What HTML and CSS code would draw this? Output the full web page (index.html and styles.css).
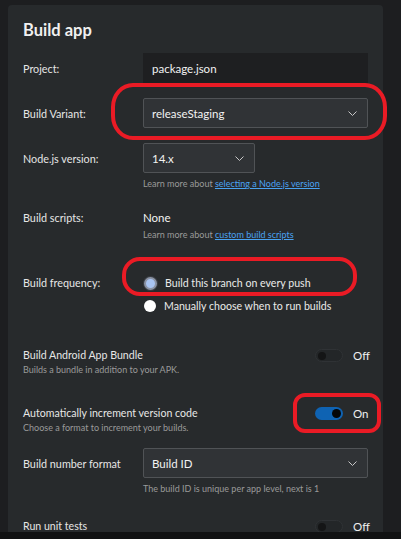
FILE: index.html
```html
<!DOCTYPE html>
<html>
<head>
<meta charset="utf-8">
<link rel="stylesheet" href="styles.css">
</head>
<body>
<div class="viewport">
  <div class="panel">
    <h1 class="title">Build app</h1>

    <div class="row row-project">
      <div class="label">Project:</div>
      <div class="input">package.json</div>
    </div>

    <div class="row row-variant">
      <div class="label">Build Variant:</div>
      <div class="select wide">
        <span>releaseStaging</span>
        <svg class="chev" width="9" height="5" viewBox="0 0 9 5"><path d="M0.5 0.5 L4.5 4.5 L8.5 0.5" fill="none" stroke="#c8c8c8" stroke-width="1"/></svg>
      </div>
      <div class="mark mark-variant"></div>
    </div>

    <div class="row row-node">
      <div class="label">Node.js version:</div>
      <div class="select narrow">
        <span>14.x</span>
        <svg class="chev" width="9" height="5" viewBox="0 0 9 5"><path d="M0.5 0.5 L4.5 4.5 L8.5 0.5" fill="none" stroke="#c8c8c8" stroke-width="1"/></svg>
      </div>
    </div>
    <div class="help help-node">Learn more about <a href="#">selecting a Node.js version</a></div>

    <div class="row row-scripts">
      <div class="label">Build scripts:</div>
      <div class="value">None</div>
    </div>
    <div class="help help-scripts">Learn more about <a href="#">custom build scripts</a></div>

    <div class="row row-freq">
      <div class="label">Build frequency:</div>
      <div class="radios">
        <div class="radio-line"><span class="radio checked"></span><span>Build this branch on every push</span></div>
        <div class="radio-line"><span class="radio"></span><span>Manually choose when to run builds</span></div>
      </div>
      <div class="mark mark-freq"></div>
    </div>

    <div class="toggle-row row-bundle">
      <div class="toggle-text">
        <div class="t-title">Build Android App Bundle</div>
        <div class="t-sub">Builds a bundle in addition to your APK.</div>
      </div>
      <div class="switch-wrap">
        <span class="switch off"><span class="knob"></span></span>
        <span class="switch-label">Off</span>
      </div>
    </div>

    <div class="toggle-row row-auto">
      <div class="toggle-text">
        <div class="t-title">Automatically increment version code</div>
        <div class="t-sub">Choose a format to increment your builds.</div>
      </div>
      <div class="switch-wrap">
        <span class="switch on"><span class="knob"></span></span>
        <span class="switch-label">On</span>
      </div>
      <div class="mark mark-auto"></div>
    </div>

    <div class="row row-format">
      <div class="label">Build number format</div>
      <div class="select wide">
        <span>Build ID</span>
        <svg class="chev" width="9" height="5" viewBox="0 0 9 5"><path d="M0.5 0.5 L4.5 4.5 L8.5 0.5" fill="none" stroke="#c8c8c8" stroke-width="1"/></svg>
      </div>
    </div>
    <div class="help help-format">The build ID is unique per app level, next is 1</div>

    <div class="toggle-row row-tests">
      <div class="toggle-text">
        <div class="t-title">Run unit tests</div>
      </div>
      <div class="switch-wrap">
        <span class="switch off"><span class="knob"></span></span>
        <span class="switch-label">Off</span>
      </div>
    </div>
  </div>
</div>
<div class="bottom-strip"></div>
</body>
</html>
```

FILE: styles.css
```css
* { box-sizing: border-box; }

html, body {
  margin: 0;
  padding: 0;
  background: #1d1e20;
  font-family: Lato, "Liberation Sans", sans-serif;
  color: #e6e6e6;
}

.viewport {
  height: 532px;
  overflow: hidden;
  padding-top: 5px;
  padding-left: 8px;
}

.bottom-strip {
  height: 7px;
  background: #111213;
}

.panel {
  width: 375px;
  min-height: 560px;
  background: #272a2c;
  border-radius: 4px 4px 0 0;
  padding: 13px 15px 0 15px;
}

.title {
  margin: 0;
  font-size: 16.5px;
  font-weight: 700;
  line-height: 24px;
  color: #f0f0f0;
}

.row {
  position: relative;
  display: flex;
  align-items: center;
  font-size: 10.8px;
}

.label {
  width: 120px;
  flex: none;
  color: #e6e6e6;
}

.input {
  width: 225px;
  height: 30px;
  background: #1e1f21;
  padding-left: 9px;
  display: flex;
  align-items: center;
  font-size: 11.5px;
  color: #f2f2f2;
}

.select {
  height: 30px;
  background: #303336;
  border: 1px solid #505356;
  border-radius: 2px;
  padding: 0 10px 0 8px;
  display: flex;
  align-items: center;
  justify-content: space-between;
  font-size: 11.5px;
  color: #f2f2f2;
}

.select.wide { width: 225px; }
.select.narrow { width: 112px; }

.chev { flex: none; }

.row-project { margin-top: 11px; }
.row-variant { margin-top: 15px; }
.row-node { margin-top: 15px; }

.help {
  margin-left: 120px;
  font-size: 9px;
  line-height: 12px;
  color: #9a9a9a;
}

.help a {
  color: #4aa3f2;
  text-decoration: underline;
}

.help-node { margin-top: 5px; }

.row-scripts { margin-top: 19px; height: 16px; }
.value { font-size: 11.5px; color: #f2f2f2; }
.help-scripts { margin-top: 4px; }

.row-freq {
  margin-top: 31px;
  align-items: flex-start;
}
.row-freq .label { line-height: 22px; }

.radios { display: flex; flex-direction: column; padding-left: 1px; }

.radio-line {
  height: 22px;
  display: flex;
  align-items: center;
  gap: 8px;
  font-size: 10.6px;
  color: #eaeaea;
}
.radio-line + .radio-line { margin-top: 1px; }

.radio {
  width: 12px;
  height: 12px;
  border-radius: 50%;
  background: #ffffff;
  flex: none;
}

.radio.checked {
  width: 13px;
  height: 13px;
  background: #a8c4f2;
  border: 2px solid #8b93a4;
  box-shadow: 0 0 0 1px #3a3e44;
}

.toggle-row {
  position: relative;
  display: flex;
  justify-content: space-between;
  align-items: flex-start;
}

.t-title {
  font-size: 10.6px;
  line-height: 15px;
  color: #e6e6e6;
}

.t-sub {
  font-size: 9px;
  line-height: 12px;
  color: #9a9a9a;
  margin-top: 1px;
}

.switch-wrap {
  display: flex;
  align-items: center;
  gap: 10px;
  height: 15px;
  font-size: 11.5px;
  color: #f0f0f0;
  width: 53px;
}

.switch {
  width: 28px;
  height: 13px;
  border-radius: 7px;
  display: flex;
  align-items: center;
  padding: 0 2px;
  flex: none;
}

.switch.off {
  background: #232628;
  border: 1px solid #2f3235;
}
.switch.off .knob {
  width: 8px;
  height: 8px;
  border-radius: 50%;
  background: #141516;
}

.switch.on {
  background: #0f63b3;
  justify-content: flex-end;
}
.switch.on .knob {
  width: 9px;
  height: 9px;
  border-radius: 50%;
  background: #050608;
}

.row-bundle { margin-top: 31px; }
.row-auto { margin-top: 30px; }
.row-format { margin-top: 14px; }
.help-format { margin-top: 5px; }
.row-tests { margin-top: 24px; }

.mark {
  position: absolute;
  border: 4px solid #ea1b25;
  pointer-events: none;
}

.mark-variant {
  left: 88px;
  top: -15px;
  width: 276px;
  height: 57px;
  border-radius: 22px / 24px;
}

.mark-freq {
  left: 99px;
  top: -15px;
  width: 235px;
  height: 39px;
  border-radius: 18px / 18px;
}

.mark-auto {
  left: 270px;
  top: -13px;
  width: 88px;
  height: 40px;
  border-radius: 12px;
}
```
